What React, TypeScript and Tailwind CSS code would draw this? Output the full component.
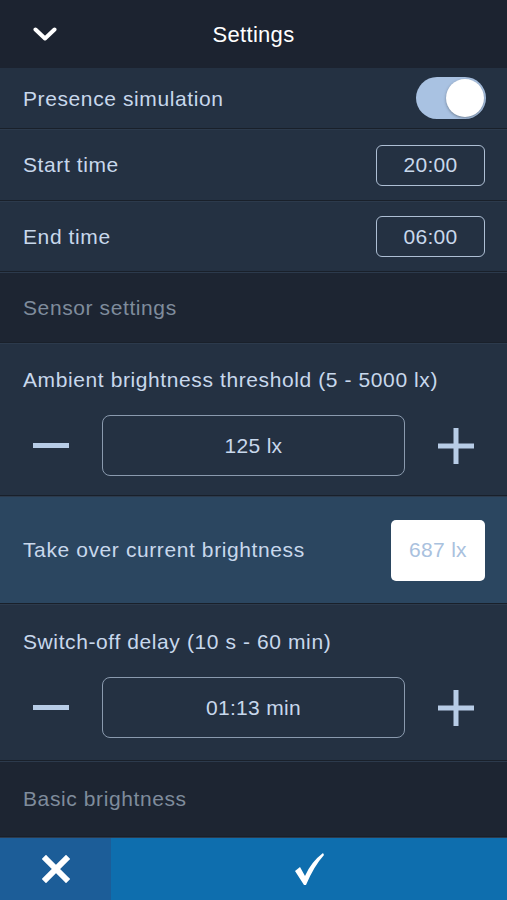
import React, { useState } from 'react';

const Divider = () => (
  <div className="flex flex-col">
    <div className="h-px bg-[#19202a]" />
    <div className="h-px bg-[#2c3a4c]" />
  </div>
);

const TimeBox = ({ value }: { value: string }) => (
  <div className="flex h-[41px] w-[109px] items-center justify-center rounded-[6px] border-[1.5px] border-[#aebfd4] text-[21px] tracking-[0.3px] text-[#c8d8ec]">
    {value}
  </div>
);

const Stepper = ({ value }: { value: string }) => (
  <div className="flex items-center">
    <button className="flex h-[61px] w-[102px] items-center justify-center">
      <svg width="36" height="6" viewBox="0 0 36 6">
        <rect x="0" y="0" width="36" height="5" fill="#b7cce6" />
      </svg>
    </button>
    <div className="flex h-[61px] w-[303px] items-center justify-center rounded-[8px] border-[1.5px] border-[#8a9aae] text-[21px] tracking-[0.3px] text-[#c8d8ec]">
      {value}
    </div>
    <button className="flex h-[61px] flex-1 items-center justify-center">
      <svg width="36" height="36" viewBox="0 0 36 36">
        <rect x="0" y="15.5" width="36" height="5" fill="#b7cce6" />
        <rect x="15.5" y="0" width="5" height="36" fill="#b7cce6" />
      </svg>
    </button>
  </div>
);

export default function App() {
  const [presence, setPresence] = useState(true);

  return (
    <div
      className="flex h-[900px] w-[507px] flex-col overflow-hidden bg-[#243142]"
      style={{ fontFamily: '"Liberation Sans", Arial, sans-serif' }}
    >
      {/* header */}
      <div className="relative flex h-[68px] items-center justify-center bg-[#1c2330]">
        <button className="absolute left-[33px] top-[27px]">
          <svg width="24" height="15" viewBox="0 0 24 15">
            <path d="M2.5 2.5 L12 11.5 L21.5 2.5" fill="none" stroke="#ffffff" strokeWidth="4" strokeLinecap="round" strokeLinejoin="round" />
          </svg>
        </button>
        <span className="text-[22px] tracking-[0.3px] text-white">Settings</span>
      </div>

      <div className="flex h-[60px] items-center justify-between pl-[23px] pr-[21px]">
        <span className="pt-[2px] text-[21px] tracking-[0.6px] text-[#c8d8ec]">Presence simulation</span>
        <button
          onClick={() => setPresence(!presence)}
          className={`flex h-[42px] w-[70px] items-center rounded-full p-[2px] ${presence ? 'justify-end bg-[#a9c2e2]' : 'justify-start bg-[#3a4a5e]'}`}
        >
          <span className="h-[38px] w-[38px] rounded-full bg-white shadow-[0_1px_3px_rgba(0,0,0,0.35)]" />
        </button>
      </div>
      <Divider />

      <div className="flex h-[70px] items-center justify-between pl-[23px] pr-[22px]">
        <span className="text-[21px] tracking-[0.6px] text-[#c8d8ec]">Start time</span>
        <TimeBox value="20:00" />
      </div>
      <Divider />

      <div className="flex h-[69px] items-center justify-between pl-[23px] pr-[22px]">
        <span className="text-[21px] tracking-[0.6px] text-[#c8d8ec]">End time</span>
        <TimeBox value="06:00" />
      </div>
      <Divider />

      <div className="flex h-[69px] items-center bg-[#1d2532] pl-[23px]">
        <span className="text-[21px] tracking-[0.6px] text-[#7f8c9c]">Sensor settings</span>
      </div>
      <Divider />

      <div className="flex h-[151px] flex-col pt-[24px]">
        <span className="pl-[23px] text-[21px] leading-[24px] tracking-[0.6px] text-[#c8d8ec]">
          Ambient brightness threshold (5 - 5000 lx)
        </span>
        <div className="mt-[23px]">
          <Stepper value="125 lx" />
        </div>
      </div>
      <Divider />

      <div className="flex h-[106px] items-center justify-between bg-[#2b4660] pl-[23px] pr-[22px]">
        <span className="text-[21px] tracking-[0.6px] text-[#c8d8ec]">Take over current brightness</span>
        <div className="flex h-[61px] w-[94px] items-center justify-center rounded-[5px] bg-white text-[21px] tracking-[0.3px] text-[#a9c1de]">
          687 lx
        </div>
      </div>
      <Divider />

      <div className="flex h-[155px] flex-col pt-[25px]">
        <span className="pl-[23px] text-[21px] leading-[24px] tracking-[0.6px] text-[#c8d8ec]">
          Switch-off delay (10 s - 60 min)
        </span>
        <div className="mt-[23px]">
          <Stepper value="01:13 min" />
        </div>
      </div>
      <Divider />

      <div className="flex h-[74px] items-center bg-[#1d2532] pl-[23px]">
        <span className="text-[21px] tracking-[0.6px] text-[#7f8c9c]">Basic brightness</span>
      </div>
      <Divider />

      {/* bottom bar */}
      <div className="flex h-[62px]">
        <button className="flex w-[111px] items-center justify-center bg-[#1c5d98]">
          <svg width="28" height="28" viewBox="0 0 28 28">
            <path d="M4 4 L24 24 M24 4 L4 24" stroke="#ffffff" strokeWidth="6" strokeLinecap="square" />
          </svg>
        </button>
        <button className="flex flex-1 items-center justify-center bg-[#0e6eae]">
          <svg width="32" height="36" viewBox="0 0 32 36">
            <path d="M2 20 L7 16 L12 25 Q18 11 30 2 L31 4 Q21 15 13 34 L11 34 Z" fill="#ffffff" />
          </svg>
        </button>
      </div>
    </div>
  );
}
